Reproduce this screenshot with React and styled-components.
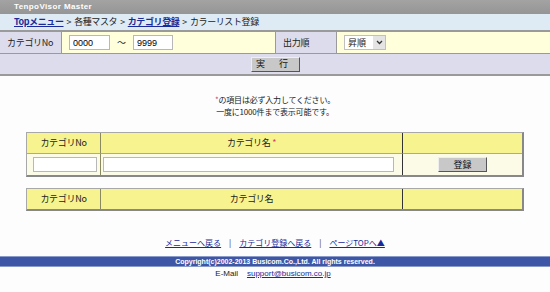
import React from 'react'
import styled, { createGlobalStyle } from 'styled-components'

const Global = createGlobalStyle`
  body {
    margin: 0;
    background: #fdfdfd;
    font-family: "Noto Sans CJK JP", "DejaVu Sans", sans-serif;
    font-size: 9px;
    line-height: 12px;
    color: #222;
  }
`

const TitleBar = styled.div`
  height: 14px;
  background: linear-gradient(#a3a3a3, #959595);
  color: #fff;
  font-family: "Liberation Sans", "Noto Sans CJK JP", sans-serif;
  font-weight: bold;
  font-size: 8px;
  letter-spacing: 0.4px;
  line-height: 14px;
  padding-left: 14px;
`

const Crumbs = styled.div`
  height: 16px;
  background: #deebf5;
  line-height: 16px;
  padding-left: 14px;
  font-size: 9px;
  letter-spacing: -0.4px;
  a { color: #1a2a99; font-weight: bold; }
`

const Sep = styled.span`
  margin: 0 3px;
`

const FormGrid = styled.div`
  display: grid;
  grid-template-columns: 62px 213px 62px 1fr;
  border-top: 2px solid #9a9a9a;
  border-bottom: 2px solid #9a9a9a;
`

const Label = styled.div`
  background: #dcdcec;
  height: 21px;
  line-height: 21px;
  padding-left: 7px;
  letter-spacing: -0.3px;
  border-right: 1px solid #9a9a9a;
  border-bottom: 1px solid #9a9a9a;
  border-left: ${p => (p.$first ? 'none' : '1px solid #9a9a9a')};
`

const Value = styled.div`
  background: #ffffdc;
  height: 21px;
  display: flex;
  align-items: center;
  gap: 7px;
  padding-left: 7px;
  border-bottom: 1px solid #9a9a9a;
`

const TextBox = styled.input`
  width: ${p => p.$w}px;
  height: 15px;
  box-sizing: border-box;
  border: 1px solid #b8b8b8;
  background: #fff;
  font-family: "Liberation Sans", sans-serif;
  font-size: 9px;
  padding: 0 3px;
  margin: 0;
`

const Tilde = styled.span`
  font-size: 9px;
`

const Select = styled.div`
  width: 42px;
  height: 15px;
  box-sizing: border-box;
  border: 1px solid #c0c0c0;
  background: #fff;
  display: flex;
  align-items: center;
  justify-content: space-between;
  padding-left: 3px;
  font-size: 9px;
  span { width: 12px; height: 13px; background: #e4e4e4; display: flex; align-items: center; justify-content: center; }
`

const ActionRow = styled.div`
  grid-column: 1 / -1;
  background: #dcdcec;
  height: 20px;
  display: flex;
  align-items: center;
  justify-content: center;
`

const GrayButton = styled.button`
  width: ${p => p.$w}px;
  height: 15px;
  margin: 0;
  padding: 0;
  background: #c8c8c8;
  border: 1px solid;
  border-color: #eee #555 #555 #eee;
  font-family: "Noto Sans CJK JP", sans-serif;
  font-size: 9px;
  line-height: 12px;
  color: #111;
  letter-spacing: ${p => p.$spacing || 0}px;
`

const Notice = styled.div`
  margin-top: 18px;
  text-align: center;
  line-height: 12px;
  font-size: 8px;
  letter-spacing: -0.2px;
  em { color: #d0406a; font-style: normal; }
`

const Table = styled.div`
  margin: ${p => p.$top}px 26px 0 26px;
  display: grid;
  grid-template-columns: 73px 302px 1fr;
  border: 1px solid #a8a8a8;
  border-right-width: 2px;
  border-bottom-width: 2px;
  border-right-color: #888;
  border-bottom-color: #888;
`

const Head = styled.div`
  background: #f7f38e;
  height: 20px;
  line-height: 20px;
  text-align: center;
  font-size: 9px;
  letter-spacing: -0.3px;
  border-left: ${p => (p.$first ? 'none' : p.$dark ? '1px solid #333' : '1px solid #8a8a60')};
  border-bottom: ${p => (p.$last ? 'none' : '1px solid #a8a8a8')};
  em { color: #d0406a; font-style: normal; }
`

const Cell = styled.div`
  background: #fbfbe8;
  height: 21px;
  display: flex;
  align-items: center;
  justify-content: ${p => p.$center ? 'center' : 'flex-start'};
  padding-left: ${p => p.$pad || 0}px;
  border-left: ${p => (p.$first ? 'none' : p.$dark ? '1px solid #333' : '1px solid #8a8a60')};
`

const Links = styled.div`
  margin-top: 26px;
  text-align: center;
  font-size: 8px;
  line-height: 12px;
  a { color: #1a2a99; }
  span { margin: 0 8px; color: #333; }
`

const CopyBar = styled.div`
  margin-top: 7px;
  height: 9px;
  background: #3d56a6;
  border-top: 1px solid #8a9acb;
  border-bottom: 1px solid #8a9acb;
  color: #fff;
  font-family: "Liberation Sans", sans-serif;
  font-weight: bold;
  font-size: 7px;
  line-height: 9px;
  text-align: center;
`

const Mail = styled.div`
  margin-top: 1px;
  text-align: center;
  font-family: "Liberation Sans", sans-serif;
  font-size: 8px;
  line-height: 12px;
  padding-right: 4px;
  a { color: #1a2a99; margin-left: 9px; }
`

export default function App() {
  return (
    <>
      <Global />
      <TitleBar>TenpoVisor Master</TitleBar>
      <Crumbs>
        <a href="#">Topメニュー</a><Sep>&gt;</Sep>各種マスタ<Sep>&gt;</Sep><a href="#">カテゴリ登録</a><Sep>&gt;</Sep>カラーリスト登録
      </Crumbs>
      <FormGrid>
        <Label $first>カテゴリNo</Label>
        <Value>
          <TextBox $w={41} defaultValue="0000" />
          <Tilde>〜</Tilde>
          <TextBox $w={40} defaultValue="9999" />
        </Value>
        <Label>出力順</Label>
        <Value>
          <Select>
            昇順
            <span>
              <svg width="7" height="5" viewBox="0 0 7 5"><path d="M1 1l2.5 2.5L6 1" stroke="#333" strokeWidth="1.3" fill="none" /></svg>
            </span>
          </Select>
        </Value>
        <ActionRow>
          <GrayButton $w={49} $spacing={6}>実 行</GrayButton>
        </ActionRow>
      </FormGrid>
      <Notice>
        <div><em>*</em>の項目は必ず入力してください。</div>
        <div>一度に1000件まで表示可能です。</div>
      </Notice>
      <Table $top={14}>
        <Head $first>カテゴリNo</Head>
        <Head>カテゴリ名 <em>*</em></Head>
        <Head $dark />
        <Cell $first $pad={6}><TextBox $w={64} /></Cell>
        <Cell $pad={2}><TextBox $w={291} /></Cell>
        <Cell $dark $center><GrayButton $w={49}>登録</GrayButton></Cell>
      </Table>
      <Table $top={11}>
        <Head $first $last>カテゴリNo</Head>
        <Head $last>カテゴリ名</Head>
        <Head $dark $last />
      </Table>
      <Links>
        <a href="#">メニューへ戻る</a>
        <span>|</span>
        <a href="#">カテゴリ登録へ戻る</a>
        <span>|</span>
        <a href="#">ページTOPへ▲</a>
      </Links>
      <CopyBar>Copyright(c)2002-2013 Busicom.Co.,Ltd. All rights reserved.</CopyBar>
      <Mail>E-Mail<a href="#">support@busicom.co.jp</a></Mail>
    </>
  )
}
